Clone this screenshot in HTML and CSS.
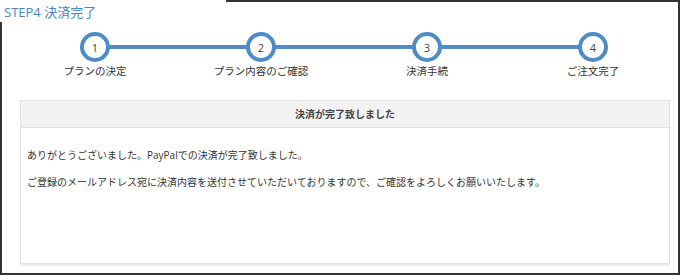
FILE: index.html
```html
<!DOCTYPE html>
<html lang="ja">
<head>
  <meta charset="UTF-8">
  <title>STEP4 決済完了</title>
  <link rel="stylesheet" href="styles.css">
</head>
<body>
  <div class="frame">
    <!-- Title sits over the frame's top-left corner -->
    <div class="title">STEP4 決済完了</div>

    <!-- Progress steps -->
    <div class="steps">
      <div class="step"><span class="circle">1</span><span class="label">プランの決定</span></div>
      <div class="step"><span class="circle">2</span><span class="label">プラン内容のご確認</span></div>
      <div class="step"><span class="circle">3</span><span class="label">決済手続</span></div>
      <div class="step"><span class="circle">4</span><span class="label">ご注文完了</span></div>
    </div>

    <!-- Result panel -->
    <div class="panel">
      <div class="panel-head">決済が完了致しました</div>
      <div class="panel-body">
        <p>ありがとうございました。PayPalでの決済が完了致しました。</p>
        <p>ご登録のメールアドレス宛に決済内容を送付させていただいておりますので、ご確認をよろしくお願いいたします。</p>
      </div>
    </div>
  </div>
</body>
</html>
```

FILE: styles.css
```css
body {
  margin: 0;
  background: #fff;
  font-family: "Open Sans", "Noto Sans CJK JP", sans-serif;
  color: #333;
}

/* Outer frame */
.frame {
  position: relative;
  width: 680px;
  height: 275px;
  box-sizing: border-box;
  border: 2px solid #333;
}

.title {
  position: absolute;
  top: -2px;
  left: -2px;
  width: 226px;
  height: 22px;
  padding: 3px 0 0 4px;
  box-sizing: border-box;
  background: #fff;
  color: #4a86bf;
  font-size: 13px;
  line-height: 18px;
}

/* Steps */
.steps {
  position: relative;
  display: grid;
  grid-template-columns: repeat(4, 1fr);
  padding: 30px 2px 0 10px;
}

.steps::before {
  content: "";
  position: absolute;
  top: 43px;
  left: 93px;
  right: 85px;
  height: 4px;
  background: #4d8cc4;
}

.step {
  display: flex;
  flex-direction: column;
  align-items: center;
}

.circle {
  position: relative;
  z-index: 1;
  width: 30px;
  height: 30px;
  box-sizing: border-box;
  border: 4px solid #4d8cc4;
  border-radius: 50%;
  background: #fff;
  display: flex;
  justify-content: center;
  align-items: center;
  font-size: 11px;
  color: #444;
}

.label {
  margin-top: 2px;
  font-size: 10.5px;
  line-height: 15px;
  color: #333;
}

/* Panel */
.panel {
  margin: 21px 8px 0 18px;
  height: 164px;
  box-sizing: border-box;
  border: 1px solid #e2e2e2;
  box-shadow: 0 2px 0 #eee;
}

.panel-head {
  height: 26px;
  background: #f2f2f2;
  border-bottom: 1px solid #e2e2e2;
  text-align: center;
  font-size: 10px;
  font-weight: bold;
  line-height: 26px;
  color: #444;
}

.panel-body {
  padding: 19px 6px 0;
}

.panel-body p {
  margin: 0 0 11px;
  font-size: 10px;
  line-height: 16px;
}
```
